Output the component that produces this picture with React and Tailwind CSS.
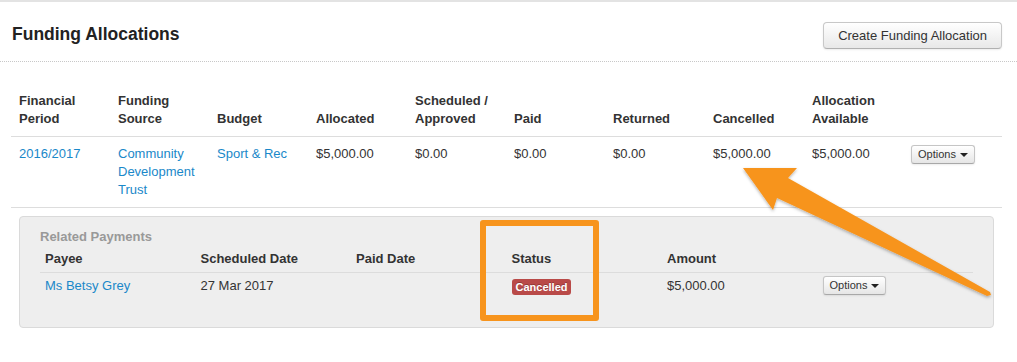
import React from "react";

const headers = [
  ["Financial", "Period"],
  ["Funding", "Source"],
  ["Budget"],
  ["Allocated"],
  ["Scheduled /", "Approved"],
  ["Paid"],
  ["Returned"],
  ["Cancelled"],
  ["Allocation", "Available"],
  [],
];

const payHeaders = ["Payee", "Scheduled Date", "Paid Date", "Status", "Amount", ""];

const OptionsButton = () => (
  <button className="inline-flex items-center gap-[4px] h-[19px] px-[6px] text-[11px] leading-[13px] text-[#333] rounded-[3px] border border-[#c5c5c5] border-b-[#a8a8a8] bg-linear-to-b from-white to-[#e6e6e6] shadow-[0_1px_2px_rgba(0,0,0,0.08)]">
    Options
    <span className="w-0 h-0 border-t-[4px] border-t-[#222] border-x-[4px] border-x-transparent mt-[1px]" />
  </button>
);

const App = () => {
  return (
    <div className="relative w-[1017px] h-[362px] bg-white overflow-hidden font-['Liberation_Sans',Arial,sans-serif] text-[13px] leading-[18px] text-[#333]">
      <div className="border-t-2 border-[#e3e3e3]" />

      {/* page header */}
      <div className="h-[60px] flex justify-between items-start border-b border-dotted border-[#c8c8c8] pl-[12px] pr-[15px]">
        <h1 className="mt-[20px] text-[17.5px] leading-[24px] font-bold text-[#222]">Funding Allocations</h1>
        <button className="mt-[20px] h-[27px] px-[14px] text-[13px] text-[#333] rounded-[4px] border border-[#c8c8c8] border-b-[#b0b0b0] bg-linear-to-b from-white to-[#e8e8e8] shadow-[0_1px_2px_rgba(0,0,0,0.08)]">
          Create Funding Allocation
        </button>
      </div>

      {/* allocations table */}
      <div className="ml-[11px] mt-[22px] w-[991px]">
        <div className="grid grid-cols-[repeat(6,99px)_100px_repeat(3,99px)] border-b border-[#dddddd]">
          {headers.map((h, i) => (
            <div key={i} className="p-2 font-bold flex flex-col justify-end h-[52px]">
              {h.map((line) => (
                <span key={line}>{line}</span>
              ))}
            </div>
          ))}
        </div>
        <div className="grid grid-cols-[repeat(6,99px)_100px_repeat(3,99px)] border-b border-[#dddddd]">
          <div className="p-2 text-[#1a88c9]">2016/2017</div>
          <div className="p-2 text-[#1a88c9]">Community Development Trust</div>
          <div className="p-2 text-[#1a88c9]">Sport &amp; Rec</div>
          <div className="p-2">$5,000.00</div>
          <div className="p-2">$0.00</div>
          <div className="p-2">$0.00</div>
          <div className="p-2">$0.00</div>
          <div className="p-2">$5,000.00</div>
          <div className="p-2">$5,000.00</div>
          <div className="p-2">
            <OptionsButton />
          </div>
        </div>

        {/* related payments */}
        <div className="p-2">
          <div className="h-[112px] rounded-[4px] border border-[#dadada] bg-[#eeeeee] px-[20px] pt-[11px]">
            <div className="font-bold text-[#999]">Related Payments</div>
            <div className="grid grid-cols-6 border-b border-[#dcdcdc]">
              {payHeaders.map((h, i) => (
                <div key={i} className="px-[5px] py-1 font-bold h-[26px]">
                  {h}
                </div>
              ))}
            </div>
            <div className="grid grid-cols-6">
              <div className="px-[5px] py-1 text-[#1a88c9]">Ms Betsy Grey</div>
              <div className="px-[5px] py-1">27 Mar 2017</div>
              <div className="px-[5px] py-1"></div>
              <div className="px-[5px] py-1">
                <span className="inline-block mt-[2px] px-[4px] py-[2px] rounded-[3px] bg-[#b94a48] text-white font-bold text-[11px] leading-[12px] [text-shadow:0_-1px_0_rgba(0,0,0,0.25)]">
                  Cancelled
                </span>
              </div>
              <div className="px-[5px] py-1">$5,000.00</div>
              <div className="px-[5px] pt-[3px]">
                <OptionsButton />
              </div>
            </div>
          </div>
        </div>
      </div>

      {/* annotation: highlight box */}
      <div className="absolute left-[480px] top-[220px] w-[119px] h-[101px] border-[6px] border-[#f7941d] rounded-[3px]" />

      {/* annotation: arrow */}
      <svg className="absolute left-0 top-0 pointer-events-none" width="1017" height="362" viewBox="0 0 1017 362">
        <defs>
          <filter id="sh" x="-10%" y="-10%" width="120%" height="130%">
            <feDropShadow dx="0" dy="1.5" stdDeviation="1.5" floodColor="#000" floodOpacity="0.3" />
          </filter>
        </defs>
        <polygon
          points="743,168 797,168 788,178 990,292 991,295 987,296 777,198 773,210"
          fill="#f7941d"
          filter="url(#sh)"
        />
      </svg>
    </div>
  );
};

export default App;
